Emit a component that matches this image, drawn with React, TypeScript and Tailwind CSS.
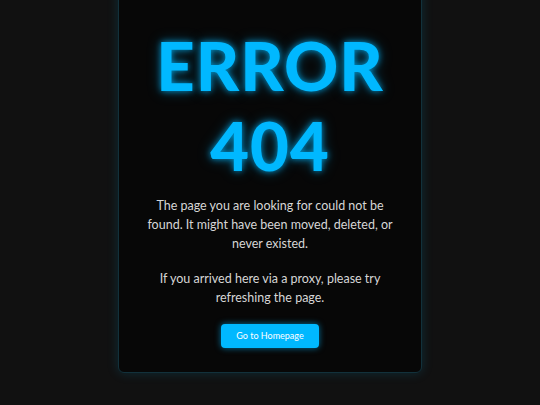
export default function App() {
  return (
    <div
      className="flex h-screen flex-col items-center justify-end overflow-hidden bg-[#111111] pb-8"
      style={{ fontFamily: "Lato, 'Noto Sans', sans-serif" }}
    >
      <div className="flex w-[304px] shrink-0 flex-col items-center rounded-md border border-[#12313b] bg-[#070707] px-7 pb-6 pt-10 shadow-[0_0_12px_rgba(0,170,230,0.18)]">
        <h1 className="text-center text-[67px] font-black leading-[80px] tracking-[1px] text-[#00b8ff] [text-shadow:0_0_6px_rgba(0,184,255,0.75),0_0_14px_rgba(0,184,255,0.35)]">
          ERROR
          <br />
          404
        </h1>
        <p className="mt-[11px] text-center text-[12.5px] leading-[19px] text-[#d6d6d6]">
          The page you are looking for could not be found. It might have been
          moved, deleted, or never existed.
        </p>
        <p className="mt-4 text-center text-[12.5px] leading-[19px] text-[#d6d6d6]">
          If you arrived here via a proxy, please try refreshing the page.
        </p>
        <button
          type="button"
          className="mt-[17px] h-6 w-[98px] rounded-[4px] bg-[#00b8ff] text-[9px] text-white shadow-[0_0_6px_rgba(0,184,255,0.6)]"
        >
          Go to Homepage
        </button>
      </div>
    </div>
  );
}
